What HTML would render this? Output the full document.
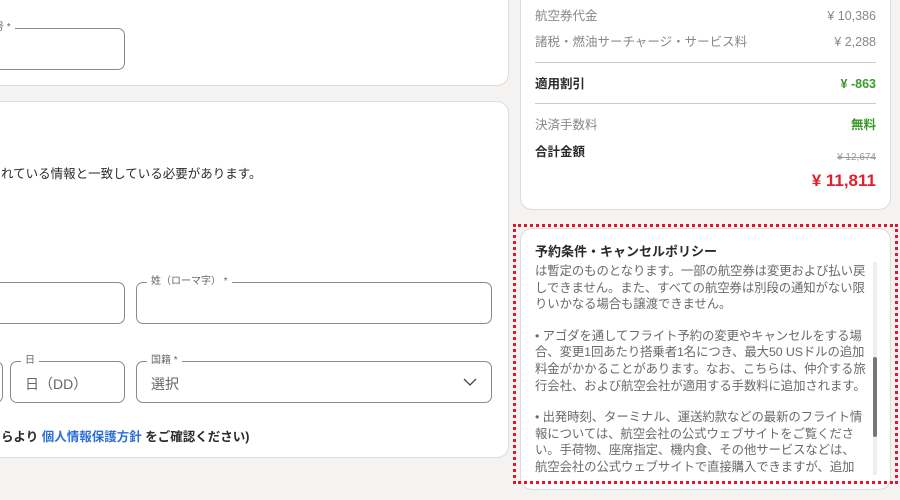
<!DOCTYPE html>
<html><head><meta charset="utf-8"><style>
*{box-sizing:border-box;margin:0;padding:0}
body{width:900px;height:500px;overflow:hidden;background:#f4f3f2;font-family:"Liberation Sans","Noto Sans CJK JP",sans-serif;position:relative;color:#2a2a2a}
.card{position:absolute;background:#fff;border:1px solid #dedcda;border-radius:12px}
.fld{position:absolute;border:1px solid #8a8a8a;border-radius:7px;height:42px}
.lbl{position:absolute;top:-8px;left:10px;background:#fff;padding:0 4px;font-size:10px;color:#666;line-height:14px}
.ph{position:absolute;left:14px;top:12px;font-size:14px;color:#666}
.row{position:absolute;left:535px;right:24px;font-size:12.5px;display:flex;justify-content:space-between;align-items:baseline;line-height:18px}
.g{color:#888}.sep{position:absolute;left:535px;width:341px;height:1px;background:#ccc}
</style></head><body>
<div class="card" style="left:-20px;top:-20px;width:529px;height:106px">
 <div class="fld" style="left:-2px;top:47px;width:146px"><div class="lbl" style="left:10px">号 *</div></div>
</div>
<div class="card" style="left:-20px;top:101px;width:529px;height:357px">
 <div style="position:absolute;left:20px;top:61px;font-size:12.5px">れている情報と一致している必要があります。</div>
 <div class="fld" style="left:-2px;top:180px;width:146px"></div>
 <div class="fld" style="left:155px;top:180px;width:356px"><div class="lbl">姓（ローマ字） *</div></div>
 <div class="fld" style="left:-2px;top:259px;width:24px"></div>
 <div class="fld" style="left:29px;top:259px;width:115px"><div class="lbl">日</div><div class="ph">日（DD）</div></div>
 <div class="fld" style="left:155px;top:259px;width:356px"><div class="lbl">国籍 *</div><div class="ph">選択</div>
  <svg style="position:absolute;right:14px;top:16px" width="14" height="9" viewBox="0 0 14 9"><path d="M1 1l6 6 6-6" fill="none" stroke="#444" stroke-width="1.3"/></svg></div>
 <div style="position:absolute;left:20px;top:324px;font-size:12.5px;font-weight:bold">らより <span style="color:#2a6ed8">個人情報保護方針</span> をご確認ください)</div>
</div>
<div class="card" style="left:520px;top:-20px;width:371px;height:230px"></div>
<div class="row g" style="top:7px"><span>航空券代金</span><span>¥ 10,386</span></div>
<div class="row g" style="top:33px"><span>諸税・燃油サーチャージ・サービス料</span><span>¥ 2,288</span></div>
<div class="sep" style="top:62px"></div>
<div class="row" style="top:75px;font-weight:bold"><span>適用割引</span><span style="color:#3a9a2a">¥ -863</span></div>
<div class="sep" style="top:103px"></div>
<div class="row g" style="top:116px"><span>決済手数料</span><span style="color:#3a9a2a;font-weight:bold">無料</span></div>
<div class="row" style="top:143px;font-weight:bold"><span>合計金額</span><span style="color:#999;font-weight:normal;font-size:10px;text-decoration:line-through;position:relative;top:4px">¥ 12,674</span></div>
<div style="position:absolute;right:24px;top:171px;font-size:17px;font-weight:bold;color:#e0202a">¥ 11,811</div>
<div class="card" style="left:520px;top:228px;width:371px;height:262px"></div>
<div style="position:absolute;left:513px;top:224px;width:385px;height:260px;border:3px dotted #e2142e"></div>
<div style="position:absolute;left:535px;top:241px;font-size:13px;font-weight:bold">予約条件・キャンセルポリシー</div>
<div style="position:absolute;left:535px;top:262px;width:335px;height:213px;overflow:hidden;font-size:12.4px;line-height:16.6px;color:#6a6a6a;letter-spacing:-0.1px">
<div style="margin-top:1px">は暫定のものとなります。一部の航空券は変更および払い戻しできません。また、すべての航空券は別段の通知がない限りいかなる場合も譲渡できません。</div>
<div style="margin-top:15px">• アゴダを通してフライト予約の変更やキャンセルをする場合、変更1回あたり搭乗者1名につき、最大50 USドルの追加料金がかかることがあります。なお、こちらは、仲介する旅行会社、および航空会社が適用する手数料に追加されます。</div>
<div style="margin-top:15px">• 出発時刻、ターミナル、運送約款などの最新のフライト情報については、航空会社の公式ウェブサイトをご覧ください。手荷物、座席指定、機内食、その他サービスなどは、<br>航空会社の公式ウェブサイトで直接購入できますが、追加</div>
</div>
<div style="position:absolute;left:873px;top:262px;width:4px;height:213px;background:#eee"></div>
<div style="position:absolute;left:873px;top:357px;width:4px;height:80px;background:#777;border-radius:2px"></div>
</body></html>
